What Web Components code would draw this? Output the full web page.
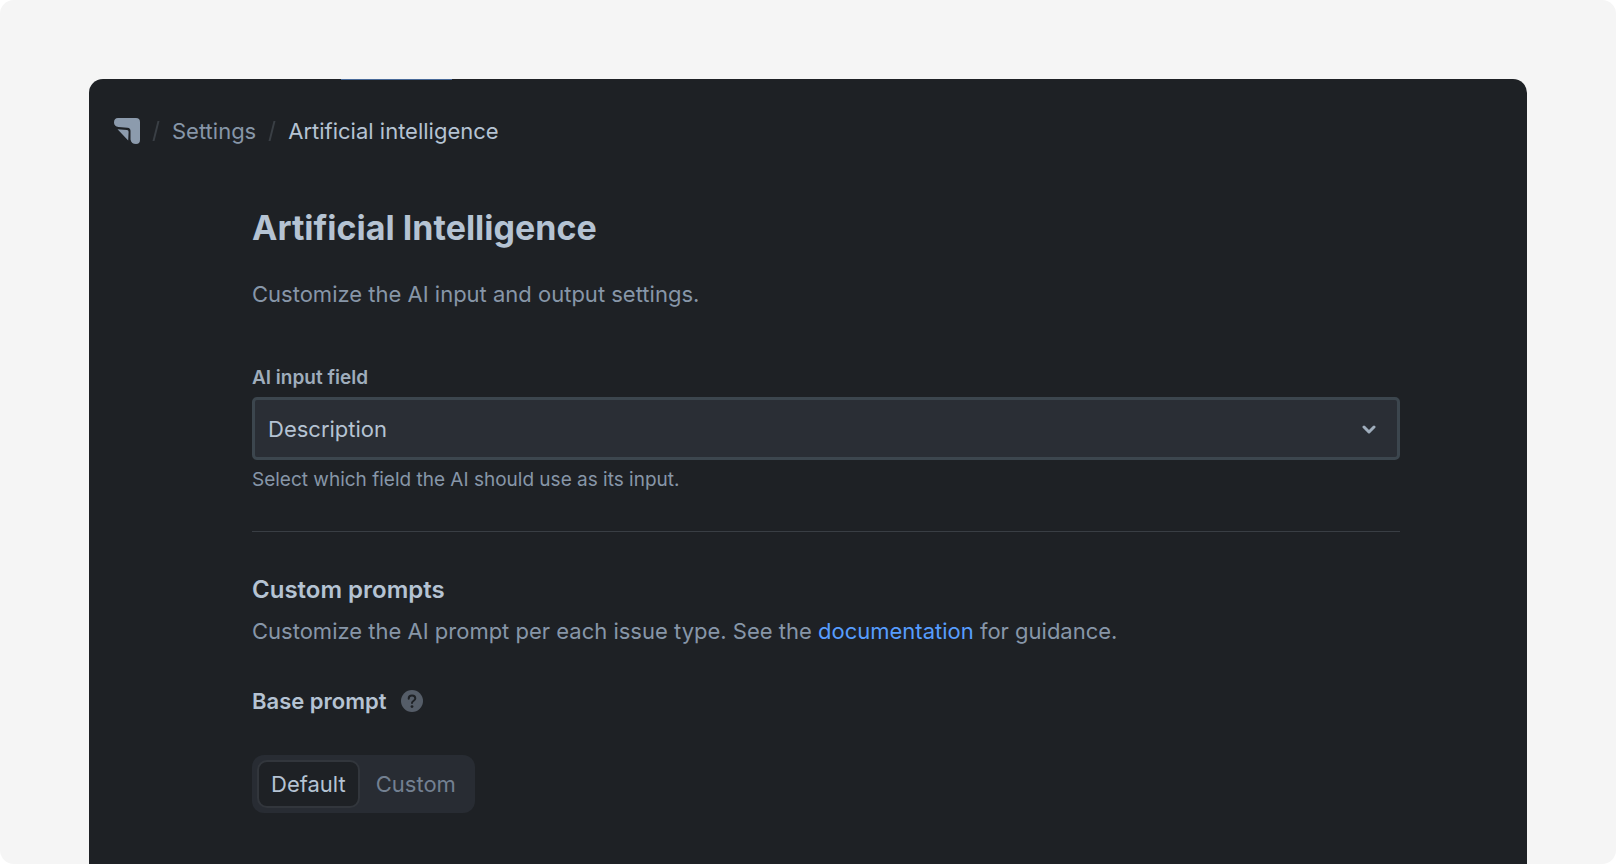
<!DOCTYPE html>
<html lang="en">
<head>
<meta charset="utf-8">
<title>Artificial Intelligence – Settings</title>
<style>
  html { background: #fff; }
  body { margin: 0; font-family: Inter, "Liberation Sans", sans-serif; font-size: 22px; line-height: 32px; color: #8796a8; }
</style>
</head>
<body>
<settings-page>
  <app-breadcrumb></app-breadcrumb>
  <settings-content></settings-content>
</settings-page>

<script>
const define = (name, html, setup) => customElements.define(name, class extends HTMLElement {
  constructor() {
    super();
    this.attachShadow({ mode: "open" }).innerHTML = html;
    if (setup) setup(this, this.shadowRoot);
  }
});

define("settings-page", `
<style>
  :host { display: flex; box-sizing: border-box; min-height: 100vh; padding: 79px 89px 0; background: #f5f5f5; border-radius: 14px; }
  .panel { flex: 1; min-width: 0; box-sizing: border-box; background: #1e2125; border-radius: 14px 14px 0 0; position: relative; overflow: hidden; }
  .progress { position: absolute; top: 0; left: 252px; width: 111px; height: 1px; background: #496a99; }
</style>
<div class="panel"><div class="progress"></div><slot></slot></div>`);

define("app-breadcrumb", `
<style>
  :host { display: block; padding: 36px 25px 0; }
  ol { display: flex; align-items: center; margin: 0; padding: 0; list-style: none; }
  li { display: flex; align-items: center; }
  li + li::before { content: ""; width: 2px; height: 20px; margin: 0 15px; background: #3a3f45; transform: skewX(-14deg); }
  a { color: #8796a8; text-decoration: none; }
  svg { display: block; }
  .here { color: #b5c3d3; }
</style>
<nav aria-label="Breadcrumb"><ol>
  <li><a href="#home" aria-label="Home"><svg width="26" height="26" viewBox="0 0 26 26" fill="#8c9bad">
    <path d="M4 0h18q4 0 4 4v18q0 4-4 4c-3 0-5-1.500-5.500-4.500V13q0-3-3-3.200L4.500 9C1.500 8.500 0 7 0 4.500Q0 0 4 0Z"/>
    <path d="M3.500 11.300L13 12q1.600.1 1.600 1.700l-.4 8.800Z"/></svg></a></li>
  <li><a href="#settings">Settings</a></li>
  <li><span class="here" aria-current="page">Artificial intelligence</span></li>
</ol></nav>`);

define("select-field", `
<style>
  :host { display: block; }
  label { display: block; font-size: 19px; line-height: 24px; font-weight: 600; color: #9fadbc; }
  .box { display: grid; align-items: center; margin: 7px 0 8px; }
  select { grid-area: 1 / 1; appearance: none; width: 100%; height: 63px; margin: 0; padding: 0 13px; border: 3px solid #3c464e; border-radius: 5px; background: #2a2e35; color: #b5c3d3; font: inherit; }
  svg { grid-area: 1 / 1; justify-self: end; margin-right: 24px; pointer-events: none; }
  p { margin: 0; font-size: 19px; line-height: 24px; }
</style>
<label for="field"><slot name="label"></slot></label>
<div class="box">
  <select id="field" aria-describedby="hint"><option>Description</option></select>
  <svg width="14" height="10" viewBox="0 0 14 10" fill="none" stroke="#9fadbc" stroke-width="3" stroke-linecap="round" stroke-linejoin="round"><path d="M2 3l5 5 5-5"/></svg>
</div>
<p id="hint"><slot name="hint"></slot></p>`);

define("help-tip", `
<style>
  :host { display: inline-flex; }
  button { padding: 0; border: 0; background: none; }
  svg { display: block; }
</style>
<button type="button" aria-label="About the base prompt"><svg width="22" height="22" viewBox="0 0 22 22">
  <circle cx="11" cy="11" r="11" fill="#555d68"/>
  <path d="M7.700 8.800Q7.700 5.600 11 5.600Q14.300 5.600 14.300 8.500C14.300 10.700 11 10.800 11 13" fill="none" stroke="#1e2125" stroke-width="2" stroke-linecap="round"/>
  <circle cx="11" cy="16.600" r="1.400" fill="#1e2125"/></svg></button>`);

define("segmented-control", `
<style>
  :host { display: flex; }
  .track { display: flex; padding: 5px; border-radius: 12px; background: #282c33; }
  button { box-sizing: border-box; height: 48px; margin: 0; padding: 0 12px; border: 2px solid transparent; border-radius: 10px; background: none; color: #738091; font: inherit; }
  button + button { padding-left: 14px; }
  button[aria-pressed="true"] { background: #1e2125; border-color: #32363c; color: #b5c3d3; }
</style>
<div class="track" role="group" aria-label="Base prompt">
  <button type="button" aria-pressed="true">Default</button><button type="button" aria-pressed="false">Custom</button>
</div>`, (host, root) => {
  const buttons = root.querySelectorAll("button");
  buttons.forEach(b => b.addEventListener("click", () =>
    buttons.forEach(o => o.setAttribute("aria-pressed", o === b))));
});

define("settings-content", `
<style>
  :host { display: block; padding: 57px 127px 50px 163px; }
  h1, h2, h3, p { margin: 0; color: #b5c3d3; }
  h1 { font-size: 34px; line-height: 48px; font-weight: 700; }
  h2 { font-size: 24px; line-height: 32px; font-weight: 600; }
  h3 { font-size: 22px; line-height: 32px; font-weight: 600; }
  p { color: #8796a8; }
  a { color: #579dff; text-decoration: none; }
  .intro { margin: 26px 0 56px; }
  hr { height: 1px; margin: 39px 0 42px; border: 0; background: #393e44; }
  .about { margin-top: 9px; }
  .base { display: flex; align-items: center; gap: 15px; margin: 38px 0; }
</style>
<h1>Artificial Intelligence</h1>
<p class="intro">Customize the AI input and output settings.</p>
<select-field><span slot="label">AI input field</span><span slot="hint">Select which field the AI should use as its input.</span></select-field>
<hr>
<h2>Custom prompts</h2>
<p class="about">Customize the AI prompt per each issue type. See the <a href="#documentation">documentation</a> for guidance.</p>
<div class="base"><h3>Base prompt</h3><help-tip></help-tip></div>
<segmented-control></segmented-control>`);
</script>
</body>
</html>
